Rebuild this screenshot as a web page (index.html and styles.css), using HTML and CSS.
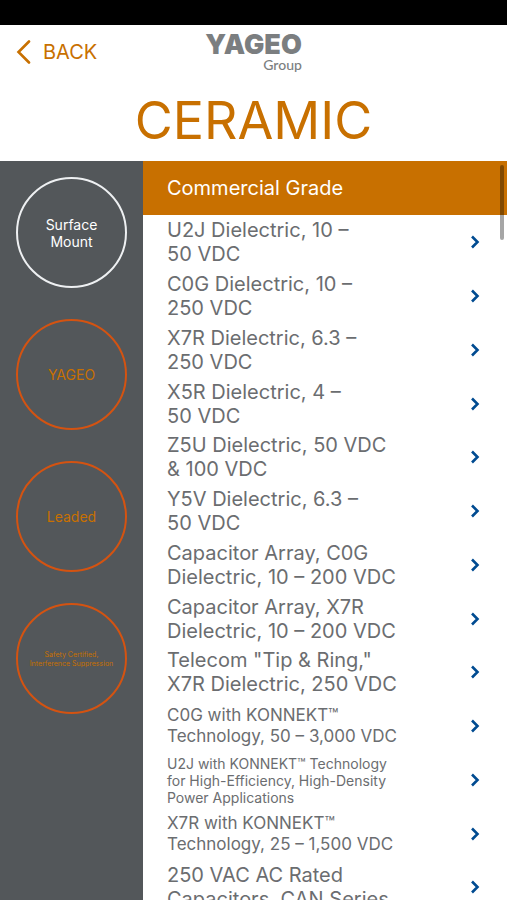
FILE: index.html
```html
<!DOCTYPE html>
<html lang="en">
<head>
<meta charset="utf-8">
<meta name="viewport" content="width=device-width, initial-scale=1">
<title>Ceramic</title>
<link rel="stylesheet" href="styles.css">
</head>
<body>
<svg class="defs" aria-hidden="true"><symbol id="chevron" viewBox="0 0 10 14"><path d="M2 1.5 7.5 7 2 12.5"/></symbol></svg>
<div class="status-bar"></div>
<header class="header">
  <div class="nav">
    <a class="back" href="#"><svg viewBox="0 0 14 24" aria-hidden="true"><path d="M12.5 1.5 2 12 12.5 22.5"/></svg>BACK</a>
    <div class="logo"><span class="logo-name">YAGEO</span><span class="logo-sub">Group</span></div>
  </div>
  <h1 class="title">CERAMIC</h1>
</header>
<div class="content">
  <nav class="sidebar" aria-label="Categories">
    <button class="category active" type="button">Surface<br>Mount</button>
    <button class="category" type="button">YAGEO</button>
    <button class="category" type="button">Leaded</button>
    <button class="category tiny" type="button">Safety Certified,<br>Interference Suppression</button>
  </nav>
  <main class="panel">
    <h2 class="section-title">Commercial Grade</h2>
    <ul class="list">
      <li><a href="#"><span>U2J Dielectric, 10 –<br>50 VDC</span><svg><use href="#chevron"/></svg></a></li>
      <li><a href="#"><span>C0G Dielectric, 10 –<br>250 VDC</span><svg><use href="#chevron"/></svg></a></li>
      <li><a href="#"><span>X7R Dielectric, 6.3 –<br>250 VDC</span><svg><use href="#chevron"/></svg></a></li>
      <li><a href="#"><span>X5R Dielectric, 4 –<br>50 VDC</span><svg><use href="#chevron"/></svg></a></li>
      <li><a href="#"><span>Z5U Dielectric, 50 VDC<br>&amp; 100 VDC</span><svg><use href="#chevron"/></svg></a></li>
      <li><a href="#"><span>Y5V Dielectric, 6.3 –<br>50 VDC</span><svg><use href="#chevron"/></svg></a></li>
      <li><a href="#"><span>Capacitor Array, C0G<br>Dielectric, 10 – 200 VDC</span><svg><use href="#chevron"/></svg></a></li>
      <li><a href="#"><span>Capacitor Array, X7R<br>Dielectric, 10 – 200 VDC</span><svg><use href="#chevron"/></svg></a></li>
      <li><a href="#"><span>Telecom "Tip &amp; Ring,"<br>X7R Dielectric, 250 VDC</span><svg><use href="#chevron"/></svg></a></li>
      <li><a class="medium" href="#"><span>C0G with KONNEKT™<br>Technology, 50 – 3,000 VDC</span><svg><use href="#chevron"/></svg></a></li>
      <li><a class="small" href="#"><span>U2J with KONNEKT™ Technology<br>for High-Efficiency, High-Density<br>Power Applications</span><svg><use href="#chevron"/></svg></a></li>
      <li><a class="medium" href="#"><span>X7R with KONNEKT™<br>Technology, 25 – 1,500 VDC</span><svg><use href="#chevron"/></svg></a></li>
      <li><a href="#"><span>250 VAC AC Rated<br>Capacitors, CAN Series</span><svg><use href="#chevron"/></svg></a></li>
    </ul>
    <div class="scrollbar"></div>
  </main>
</div>
</body>
</html>
```
FILE: styles.css
```css
* { box-sizing: border-box; }

body {
  margin: 0;
  height: 100vh;
  display: flex;
  flex-direction: column;
  overflow: hidden;
  background: #fff;
  color: #6b6d70;
  font-family: Inter, "Liberation Sans", sans-serif;
}

a { color: inherit; text-decoration: none; }

.defs { position: absolute; width: 0; height: 0; }

.status-bar { flex: none; height: 25px; background: #000; }

.header { flex: none; color: #c87000; }

.nav {
  display: grid;
  grid-template-columns: 1fr auto 1fr;
  align-items: start;
  padding: 7px 16px 0;
}

.back {
  display: flex;
  align-items: center;
  gap: 12px;
  height: 40px;
  font-size: 20px;
}

.back svg {
  width: 15px;
  height: 24px;
  fill: none;
  stroke: currentColor;
  stroke-width: 2.6;
  stroke-linecap: round;
}

.logo {
  display: flex;
  flex-direction: column;
  align-items: flex-end;
  color: #7b7e80;
}

.logo-name { font-size: 27px; line-height: 26px; font-weight: 900; }

.logo-sub { font-family: Lato, sans-serif; font-size: 14px; line-height: 14px; font-weight: 500; }

.title {
  margin: 0;
  padding: 17px 0 8px;
  text-align: center;
  font-size: 52px;
  line-height: 64px;
  font-weight: 400;
}

.content { flex: 1; display: flex; min-height: 0; }

.sidebar {
  flex: 0 0 143px;
  display: flex;
  flex-direction: column;
  align-items: center;
  gap: 31px;
  padding-top: 16px;
  background: #53575a;
}

.category {
  flex: none;
  width: 111px;
  height: 111px;
  padding: 0;
  border: 2px solid #d45311;
  border-radius: 50%;
  background: none;
  color: #c87000;
  font-family: inherit;
  font-size: 14px;
  line-height: 17px;
  white-space: nowrap;
}

.category.active { border-color: #eef0f2; color: #fff; }

.category.tiny { font-size: 7px; line-height: 9px; }

.panel { position: relative; flex: 1; min-width: 0; }

.section-title {
  margin: 0;
  padding: 14px 24px;
  background: #c87000;
  color: #fff;
  font-size: 20px;
  line-height: 26px;
  font-weight: 400;
}

.list { margin: 0; padding: 0; list-style: none; }

.list a {
  display: flex;
  align-items: center;
  justify-content: space-between;
  height: 54px;
  padding: 0 27px 0 24px;
  font-size: 20px;
  line-height: 24px;
  white-space: nowrap;
}

.list li:nth-child(4n) a { height: 53px; }

.list a.medium { font-size: 17px; line-height: 21px; }

.list a.small { font-size: 14px; line-height: 17px; }

.list svg {
  flex: none;
  width: 10px;
  height: 14px;
  fill: none;
  stroke: #004b91;
  stroke-width: 2.6;
}

.scrollbar {
  position: absolute;
  top: 4px;
  right: 3px;
  width: 4px;
  height: 75px;
  border-radius: 2px;
  background: rgba(0, 0, 0, 0.35);
}
```
